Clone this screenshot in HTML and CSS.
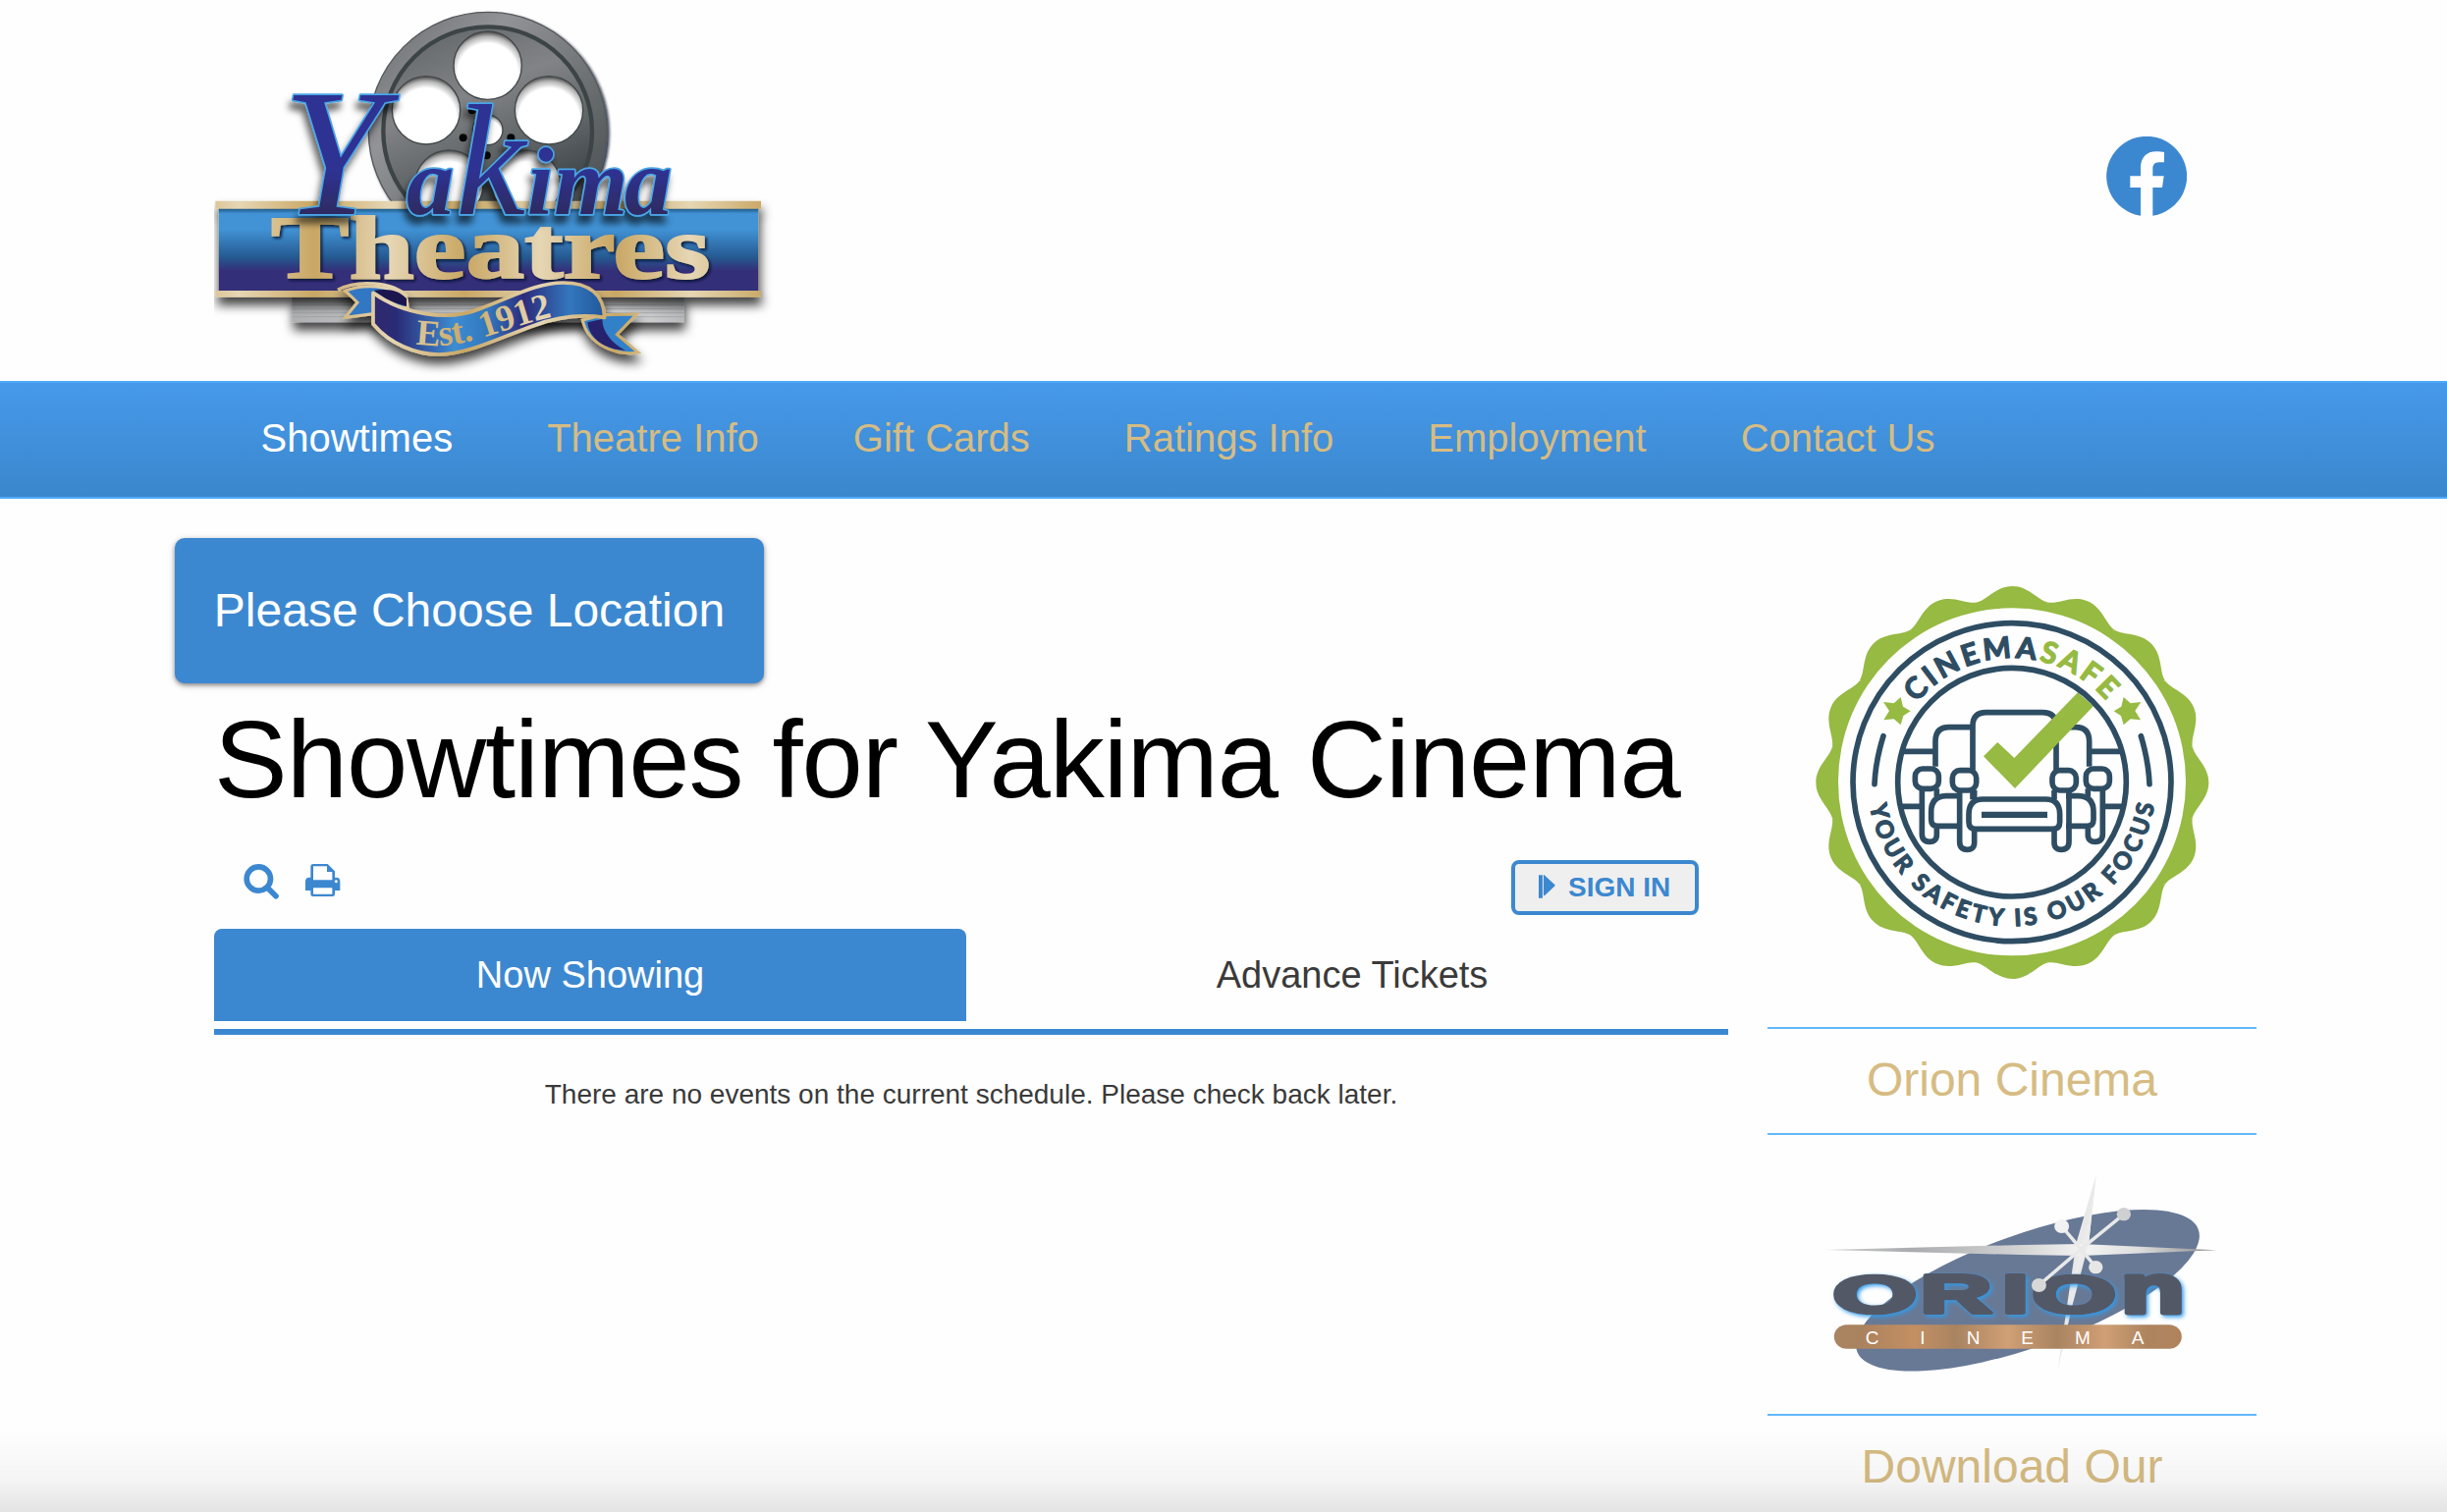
FILE: index.html
```html
<!DOCTYPE html>
<html lang="en">
<head>
<meta charset="utf-8">
<title>Yakima Theatres</title>
<link rel="stylesheet" href="styles.css">
</head>
<body>
<header class="header">
  <svg class="logo" viewBox="24 0 1710 1164" role="img" aria-label="Yakima Theatres">
    <defs>
      <linearGradient id="reel" x1="0" y1="0" x2="1" y2="1"><stop offset="0" stop-color="#65696c"/><stop offset=".3" stop-color="#929396"/><stop offset=".6" stop-color="#6d7173"/><stop offset="1" stop-color="#3b4143"/></linearGradient>
      <linearGradient id="disc" x1="0.2" y1="0" x2=".6" y2="1"><stop offset="0" stop-color="#62676a"/><stop offset=".35" stop-color="#828386"/><stop offset=".7" stop-color="#575d60"/><stop offset="1" stop-color="#303739"/></linearGradient>
      <radialGradient id="hole" cx=".5" cy=".62" r=".62"><stop offset="0" stop-color="#fff"/><stop offset=".72" stop-color="#fff"/><stop offset=".88" stop-color="#b5b5b5"/><stop offset="1" stop-color="#444"/></radialGradient>
      <linearGradient id="gold" spreadMethod="reflect" gradientUnits="userSpaceOnUse" x1="100" x2="330" y1="0" y2="0"><stop offset="0" stop-color="#e6d6b4"/><stop offset="1" stop-color="#c9a764"/></linearGradient>
      <linearGradient id="blue" x1="0" y1="0" x2="0" y2="1"><stop offset="0" stop-color="#205a87"/><stop offset=".06" stop-color="#4193d6"/><stop offset=".25" stop-color="#4193d6"/><stop offset=".6" stop-color="#25588f"/><stop offset=".76" stop-color="#342f79"/><stop offset="1" stop-color="#342f79"/></linearGradient>
      <linearGradient id="ink" gradientUnits="userSpaceOnUse" x1="0" x2="0" y1="520" y2="670"><stop offset="0" stop-color="#2e3192"/><stop offset="1" stop-color="#2e2b5c"/></linearGradient>
      <linearGradient id="ribbon" gradientUnits="userSpaceOnUse" x1="510" x2="1217" y1="0" y2="0"><stop offset="0" stop-color="#30296d"/><stop offset=".1" stop-color="#2b2b77"/><stop offset=".35" stop-color="#3c8cd2"/><stop offset=".5" stop-color="#3277bd"/><stop offset=".65" stop-color="#2c2b7b"/><stop offset=".85" stop-color="#3277bd"/><stop offset="1" stop-color="#23569a"/></linearGradient>
      <linearGradient id="silver" x1="0" x2="1" y1="0" y2="0"><stop offset="0" stop-color="#aeb0b2"/><stop offset=".3" stop-color="#c6c7c9"/><stop offset=".8" stop-color="#e6e6e7"/><stop offset="1" stop-color="#b6b8ba"/></linearGradient>
      <filter id="shade" x="-10%" y="-10%" width="120%" height="220%"><feDropShadow dx="4" dy="24" stdDeviation="16" flood-color="#000" flood-opacity=".75"/></filter>
      <filter id="shadeSmall" x="-10%" y="-10%" width="120%" height="130%"><feDropShadow dx="6" dy="6" stdDeviation="4" flood-color="#06102c" flood-opacity=".85"/></filter>
      <filter id="shadeScript" x="-20%" y="-20%" width="140%" height="150%"><feDropShadow dx="-8" dy="24" stdDeviation="11" flood-color="#000" flood-opacity=".6"/></filter>
      <path id="motto" d="M640 1050C710 1066 790 1050 870 1024S1010 978 1075 964"/>
    </defs>
    <g filter="url(#shadeSmall)">
      <circle cx="860" cy="401" r="364" fill="url(#reel)" stroke="#55595b" stroke-width="4"/>
    </g>
    <circle cx="860" cy="401" r="319" fill="url(#disc)" stroke="#3c4446" stroke-width="13"/>
    <g fill="url(#hole)" stroke="#42484a" stroke-width="4">
      <circle cx="860" cy="200" r="104"/><circle cx="672" cy="337" r="104"/><circle cx="1047" cy="337" r="104"/>
      <circle cx="742" cy="563" r="104"/><circle cx="978" cy="563" r="104"/><circle cx="860" cy="397" r="46"/>
    </g>
    <g fill="#050505"><circle cx="812" cy="337" r="12"/><circle cx="785" cy="421" r="12"/><circle cx="931" cy="421" r="12"/><circle cx="857" cy="475" r="12"/></g>
    <g filter="url(#shade)"><path d="M262 900H1460V985H262z" fill="url(#silver)"/></g>
    <path d="M262 932H1460M262 944H1460M262 956H1460M262 968H1460" stroke="#96999c" stroke-width="3" opacity=".55"/>
    <g filter="url(#shade)"><path d="M28 614H1695V638H1688V888H1695V908H28V888H36V638H28z" fill="url(#gold)"/></g>
    <path d="M38 638H1687V888H38z" fill="url(#blue)"/>
    <text class="logo-name" x="198" y="848" textLength="1342" lengthAdjust="spacingAndGlyphs" fill="url(#gold)" stroke="url(#gold)" filter="url(#shadeSmall)">Theatres</text>
    <g filter="url(#shade)">
      <path d="M425 888C480 868 560 868 612 912L616 940H518V958L425 970L462 924z" fill="#3277c4" stroke="url(#gold)" stroke-width="9"/>
      <path d="M512 888C560 880 590 890 612 912V936L560 920z" fill="#1d1650"/>
      <path d="M402 886C460 855 570 860 614 906" fill="none" stroke="url(#gold)" stroke-width="11"/>
      <path d="M1150 978L1215 962L1315 960L1255 1022L1320 1077C1250 1088 1165 1050 1150 978z" fill="#3380c8" stroke="url(#gold)" stroke-width="9"/>
      <path d="M1165 985L1210 975C1210 1015 1240 1050 1280 1070C1220 1070 1170 1035 1165 985z" fill="#27206e"/>
      <path d="M510 895C600 960 740 985 840 942C940 905 1010 864 1090 864C1170 864 1215 900 1217 970C1160 962 1080 965 1000 995C900 1030 800 1083 710 1083C640 1083 560 1050 510 990z" fill="url(#ribbon)" stroke="url(#gold)" stroke-width="11" stroke-linejoin="round"/>
    </g>
    <text class="logo-motto" fill="url(#gold)"><textPath href="#motto" textLength="430" lengthAdjust="spacingAndGlyphs">Est. 1912</textPath></text>
    <g class="logo-script" fill="url(#ink)" filter="url(#shadeScript)">
      <text><tspan class="script-y" x="234" y="655">Y</tspan><tspan x="612" y="655">a</tspan><tspan class="script-k" x="762" y="655">k</tspan><tspan x="980" y="655">i</tspan><tspan x="1063" y="655">m</tspan><tspan x="1278" y="655">a</tspan></text>
    </g>
  </svg>
  <a class="facebook" href="#" aria-label="Facebook">
    <svg viewBox="0 0 246 244"><path fill="#3c88d0" d="M105 242V156H73V121H105V96C105 64 124 46 152 46 162 46 172 47 177 48V79H162C147 79 142 88 142 98V121H176L171 156H142V242A123 122 0 1 0 105 242z"/></svg>
  </a>
</header>
<nav class="nav">
  <a class="nav-link current" href="#">Showtimes</a>
  <a class="nav-link" href="#">Theatre Info</a>
  <a class="nav-link" href="#">Gift Cards</a>
  <a class="nav-link" href="#">Ratings Info</a>
  <a class="nav-link" href="#">Employment</a>
  <a class="nav-link" href="#">Contact Us</a>
</nav>
<div class="columns">
  <main class="content">
    <button class="location">Please Choose Location</button>
    <h1 class="title">Showtimes for Yakima Cinema</h1>
    <div class="toolbar">
      <svg class="tool" viewBox="0 0 108 108"><circle cx="46" cy="45" r="36.500" fill="none" stroke="#3c88d0" stroke-width="17"/><path d="M75 74L99 98" stroke="#3c88d0" stroke-width="17" stroke-linecap="round"/></svg>
      <svg class="tool" viewBox="0 0 108 108"><path fill="#3c88d0" fill-rule="evenodd" d="M16 8Q16 0 24 0H68L90 22V41H94Q106 41 106 53V81H90V92Q90 99 83 99H23Q16 99 16 92V81H0V53Q0 41 12 41H16zM24 7V49H82V24H66V7zM24 73V92H82V73zM94 49a4.500 4.500 0 1 0 .1 0z"/></svg>
      <button class="sign-in"><svg class="sign-icon" viewBox="0 0 52 72"><path fill="#3c88d0" d="M0 0H12V72H0zM15 2Q15-3 20 2L49 29Q53 32 49 35L20 63Q15 66 15 61z"/></svg>SIGN IN</button>
    </div>
    <div class="tabs">
      <a class="tab selected" href="#">Now Showing</a>
      <a class="tab" href="#">Advance Tickets</a>
    </div>
    <p class="message">There are no events on the current schedule. Please check back later.</p>
  </main>
  <aside class="sidebar">
    <svg class="badge" viewBox="0 0 1380 1320" role="img" aria-label="CinemaSafe">
      <defs>
        <path id="lobe" d="M0 0L-109.400-550.200C-78-557-50-600 0-600S78-557 109.400-550.200z"/>
        <g id="quad"><use href="#lobe"/><use href="#lobe" transform="rotate(22.500)"/><use href="#lobe" transform="rotate(45)"/><use href="#lobe" transform="rotate(67.500)"/></g>
        <path id="arcTop" d="M396.100 406.700A381 381 0 0 1 979.900 406.700"/>
        <path id="arcBottom" d="M250.300 703.600A440 440 0 0 0 1125.300 688.300"/>
        <g id="farSeat">
          <path d="M453 602V525Q453 482 495 482H566M355 556H450M350 724H410"/>
          <rect x="391" y="609" width="72" height="61" rx="23"/>
          <path d="M412 670V808Q412 832 435 832T457 808V786M457 670V694M524 692H485Q440 694 440 740V764Q440 784 460 784H524"/>
        </g>
        <g id="nearSide"><rect x="505" y="614" width="73" height="61" rx="23"/><path d="M527 675V832Q527 856 550 856T572 832V797M572 675V703"/></g>
      </defs>
      <g fill="#96ba42">
        <circle cx="688" cy="651" r="556"/>
        <g transform="translate(688 651)"><use href="#quad"/><use href="#quad" transform="rotate(90)"/><use href="#quad" transform="rotate(180)"/><use href="#quad" transform="rotate(270)"/></g>
      </g>
      <circle cx="687" cy="649" r="531" fill="#fefefe"/>
      <g fill="none" stroke="#2e4d63" stroke-width="17">
        <circle cx="687" cy="650" r="486"/>
        <path d="M294 509Q270 585 267 656M1081 509Q1104 585 1107 656" stroke-linecap="round"/>
        <use href="#farSeat"/>
        <use href="#farSeat" transform="matrix(-1 0 0 1 1376 0)"/>
        <path d="M567 614V478Q567 437 608 437H780Q822 437 822 478V614M567 670V703"/>
        <use href="#nearSide"/>
        <use href="#nearSide" transform="matrix(-1 0 0 1 1388 0)"/>
        <path d="M598 702H790Q833 702 833 748V772Q833 793 812 793H576Q555 793 555 772V748Q555 702 598 702z"/>
      </g>
      <path d="M594 740H795V759H594z" fill="#2e4d63"/>
      <g fill="#96ba42">
        <path d="M600 571L643 528L694 576L888 376L936 417L696 669z"/>
        <path id="star" d="M377 433L355 447 347 475 326 457 295 460 312 432 294 405 326 409 347 390 354 419z"/>
        <use href="#star" transform="matrix(-1 0 0 1 1375 0)"/>
      </g>
      <circle cx="687" cy="650" r="349" fill="none" stroke="#2e4d63" stroke-width="17"/>
      <text class="badge-top"><textPath href="#arcTop" startOffset="50%" text-anchor="middle">CINEMA<tspan class="badge-green">SAFE</tspan></textPath></text>
      <text class="badge-bottom"><textPath href="#arcBottom" startOffset="50%" text-anchor="middle">YOUR SAFETY IS OUR FOCUS</textPath></text>
    </svg>
    <h2 class="side-title">Orion Cinema</h2>
    <svg class="orion" viewBox="0 0 498 284" role="img" aria-label="Orion Cinema">
      <defs>
        <linearGradient id="copper"><stop offset="0" stop-color="#a98461"/><stop offset=".08" stop-color="#aa825e"/><stop offset=".23" stop-color="#c48f63"/><stop offset=".35" stop-color="#a98461"/><stop offset=".5" stop-color="#d09f75"/><stop offset=".64" stop-color="#a98461"/><stop offset=".78" stop-color="#d09f75"/><stop offset=".9" stop-color="#ad845f"/><stop offset="1" stop-color="#b1835c"/></linearGradient>
        <linearGradient id="beam"><stop offset="0" stop-color="#d0d0d0"/><stop offset=".22" stop-color="#a9abad"/><stop offset=".5" stop-color="#d4d4d5"/><stop offset=".66" stop-color="#f4f4f4"/><stop offset=".8" stop-color="#dededf"/><stop offset="1" stop-color="#888"/></linearGradient>
        <filter id="glow" x="-10%" y="-20%" width="120%" height="160%"><feDropShadow dx="2" dy="2" stdDeviation="2" flood-color="#2d9cec"/></filter>
      </defs>
      <g transform="translate(-20 -136) scale(.35714 .33333)">
        <ellipse cx="798" cy="883" rx="521" ry="171" transform="rotate(-21.200 798 883)" fill="#687996"/>
        <path d="M993 530L972 740L925 930L883 1130L906 960L936 740z" fill="#e9e9ea"/>
      </g>
      <g class="orion-name" filter="url(#glow)">
        <text transform="translate(66.500 180.500) scale(1.100 .535)">O</text>
        <text transform="translate(155.500 180.500) scale(1.010 .560)">R</text>
        <text transform="translate(238.700 180.500) scale(.980 .560)">I</text>
        <text transform="translate(269.500 180.500) scale(1.100 .535)">O</text>
        <text transform="translate(360 180.500) scale(1.060 .700)">n</text>
      </g>
      <g transform="translate(-20 -136) scale(.35714 .33333)">
        <path d="M220 759L780 744L950 741L1337 760L950 777L780 774z" fill="url(#beam)"/>
        <path d="M975 660L993 530L972 740L940 830L930 830z" fill="#ececec"/>
        <path d="M950 757L895 687M950 757L1072 650M950 757L992 812M950 757L830 867" stroke="#e9e9ea" stroke-width="10"/>
        <g fill="#e6e6e7"><circle cx="895" cy="687" r="21" fill="#f2f2f2"/><circle cx="1072" cy="650" r="20" fill="#cfd0d1"/><circle cx="992" cy="812" r="20"/><circle cx="830" cy="867" r="21" fill="#d8d8d9"/></g>
        <rect x="246" y="988" width="991" height="73" rx="36" fill="url(#copper)"/>
      </g>
      <text class="orion-sub"><tspan x="106.500" y="212.500">C</tspan><tspan x="158" y="212.500">I</tspan><tspan x="209.500" y="212.500">N</tspan><tspan x="264.500" y="212.500">E</tspan><tspan x="321" y="212.500">M</tspan><tspan x="377" y="212.500">A</tspan></text>
    </svg>
    <h2 class="side-title">Download Our</h2>
  </aside>
</div>
<div class="fade"></div>
</body>
</html>
```
FILE: styles.css
```css
* { box-sizing: border-box; }

body {
  margin: 0;
  height: 1540px;
  overflow: hidden;
  background: #fefefe;
  color: #3a3a3a;
  font-family: "Liberation Sans", Arial, sans-serif;
}

a { text-decoration: none; color: inherit; }
svg { display: block; }

.header {
  display: flex;
  justify-content: space-between;
  height: 388px;
  padding: 0 265px 0 218px;
}
.logo { width: 570px; height: 388px; }
.facebook { margin-top: 139px; width: 82px; height: 82px; }

.logo-name { font: bold 275px "Liberation Serif", serif; stroke-width: 6px; }
.logo-motto { font: bold 112px "Liberation Serif", serif; }
.logo-script {
  font: italic bold 290px "Liberation Serif", serif;
  stroke: #4aa5e6;
  stroke-width: 10px;
  stroke-linejoin: round;
  paint-order: stroke;
}
.script-y { font-size: 550px; font-weight: normal; }
.script-k { font-size: 480px; font-weight: normal; }

.nav {
  display: flex;
  gap: 96px;
  align-items: center;
  height: 120px;
  padding: 0 0 4px 265.5px;
  border-top: 2px solid #4fa8f8;
  border-bottom: 2px solid #4fa8f8;
  background: linear-gradient(#4699ea, #3b87cd);
}
.nav-link { color: #d6bc83; font-size: 40px; line-height: 48px; white-space: nowrap; }
.nav-link.current { color: #fff; }

.columns {
  display: flex;
  gap: 40px;
  padding: 0 194px 0 218px;
}
.content { width: 1542px; padding-top: 40px; }
.sidebar { width: 498px; padding-top: 72px; }

.location {
  display: block;
  width: 600px;
  height: 148px;
  margin: 0 0 0 -40px;
  padding: 0 0 1px;
  border: 0;
  border-radius: 10px;
  background: #3c88d0;
  box-shadow: 0 2px 4px rgba(0, 0, 0, .4), 0 2px 10px rgba(0, 0, 0, .14);
  color: #fff;
  font: 48px "Liberation Sans", Arial, sans-serif;
}

.title {
  margin: 18px 0 42px;
  color: #000;
  font-size: 112px;
  font-weight: normal;
  letter-spacing: -1.04px;
  line-height: 120px;
  white-space: nowrap;
}

.toolbar {
  display: flex;
  gap: 27px;
  height: 56px;
  padding: 0 30px;
}
.tool { width: 36px; height: 36px; margin-top: 4px; }
.sign-in {
  display: flex;
  align-items: center;
  gap: 13px;
  width: 191px;
  height: 56px;
  margin-left: auto;
  padding: 0 0 0 24px;
  border: 4px solid #3c88d0;
  border-radius: 8px;
  background: #efefef;
  color: #3c88d0;
  font: bold 28px "Liberation Sans", Arial, sans-serif;
  white-space: nowrap;
}
.sign-icon { width: 17px; height: 24px; margin-top: -3px; }

.tabs {
  display: flex;
  gap: 10px;
  margin-top: 14px;
  padding-bottom: 8px;
  border-bottom: 6px solid #3c88d0;
}
.tab {
  flex: 1;
  height: 94px;
  border-radius: 8px 8px 0 0;
  font-size: 38px;
  line-height: 94px;
  text-align: center;
}
.tab.selected { background: #3c88d0; color: #fff; }

.message { margin: 45px 0 0; font-size: 28px; line-height: 32px; text-align: center; }

.badge { width: 460px; height: 440px; margin: 0 0 26px 20px; }
.badge-top, .badge-bottom {
  fill: #2e4d63;
  stroke: #2e4d63;
  stroke-width: 4px;
  stroke-linejoin: round;
  font-family: Lato, sans-serif;
  font-weight: bold;
}
.badge-top { font-size: 90px; letter-spacing: 10px; }
.badge-green { fill: #96ba42; stroke: #96ba42; }
.badge-bottom { font-size: 72px; letter-spacing: 11px; }

.side-title {
  height: 110px;
  margin: 0;
  padding-bottom: 3px;
  border-top: 2px solid #62b8fb;
  border-bottom: 2px solid #62b8fb;
  color: #d6bc83;
  font-size: 48px;
  font-weight: normal;
  line-height: 103px;
  text-align: center;
}
.orion { width: 498px; height: 284px; }
.orion-name {
  fill: #525966;
  stroke: #525966;
  stroke-width: 7px;
  stroke-linejoin: round;
  font: bold 100px "Liberation Sans", Arial, sans-serif;
}
.orion-sub { fill: #fff; font: 19px "Liberation Sans", Arial, sans-serif; text-anchor: middle; }

/* Soft shade over the bottom edge of the viewport */
.fade {
  position: fixed;
  inset: auto 0 0;
  height: 84px;
  background: linear-gradient(rgba(0, 0, 0, 0), rgba(0, 0, 0, .035) 60%, rgba(0, 0, 0, .105));
}
```
